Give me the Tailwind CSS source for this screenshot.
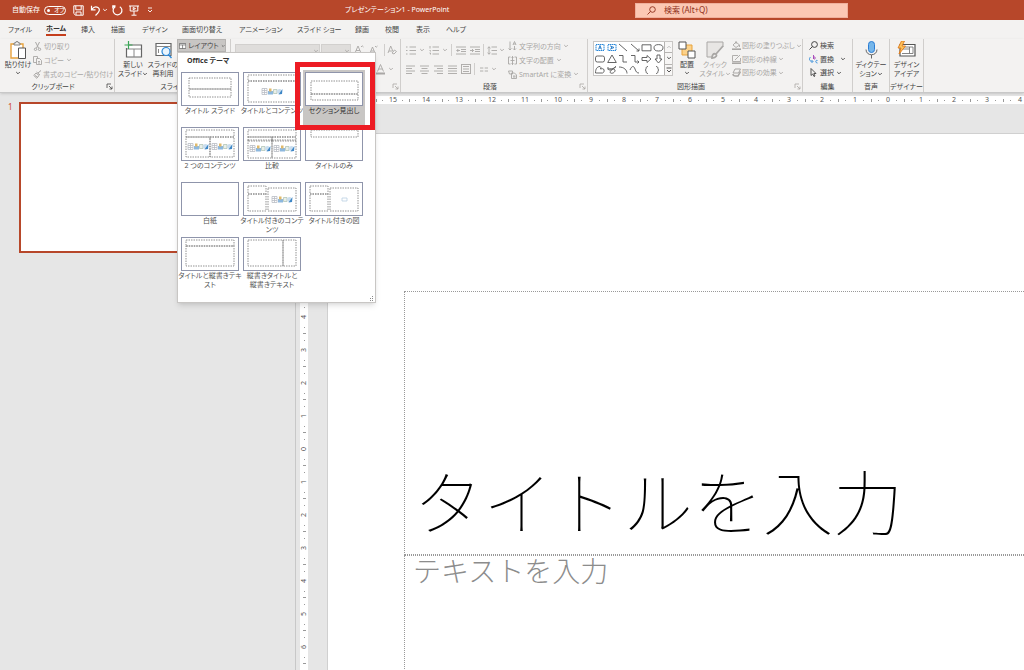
<!DOCTYPE html>
<html lang="ja">
<head>
<meta charset="utf-8">
<meta name="viewport" content="width=device-width, initial-scale=1">
<title>プレゼンテーション1 - PowerPoint</title>
<script src="https://cdn.jsdelivr.net/npm/@tailwindcss/browser@4"></script>
</head>
<body class="flex h-screen flex-col overflow-hidden bg-[#e6e6e6] font-['Noto_Sans','Noto_Sans_CJK_JP',sans-serif] text-[8px] leading-[10px] text-[#444]">

<svg class="hidden" aria-hidden="true">
  <symbol id="chev" viewBox="0 0 6 4"><path d="M1.200 1 3 2.800 4.800 1" fill="none" stroke="currentColor" stroke-width=".9"/></symbol>
  <symbol id="launch" viewBox="0 0 7 7"><path d="M1 5V1h4M3 3l3 3M6 3.500V6H3.500" fill="none" stroke="currentColor" stroke-width=".8"/></symbol>
  <symbol id="content" viewBox="0 0 22 9">
    <path d="M1 1.500h5v6H1zM1 3.500h5M1 5.500h5M3.500 1.500v6" fill="#fff" stroke="#b9bcc4" stroke-width=".8"/>
    <rect x="7" y="4" width="5" height="3.500" fill="#8db8de"/><rect x="8" y="1.500" width="2.500" height="3" fill="#e0b96a"/>
    <path d="M12.500 2.500h3.500v4h-3.500z" fill="#e9efe9" stroke="#a9bfb0" stroke-width=".7"/>
    <circle cx="18.500" cy="4.500" r="2.500" fill="#c9ddee"/><path d="M17.500 7.500 21.500 2l-.5 5z" fill="#3d86c6"/>
  </symbol>
</svg>

<header class="flex h-5 shrink-0 items-center bg-[#b7472a] text-white">
  <div class="flex w-[345px] items-center pl-3">
    <label for="autosave" class="w-[30px] text-[7px] whitespace-nowrap">自動保存</label>
    <span class="relative ml-[2px] h-[9px] w-[22px] rounded-full border border-white">
      <input id="autosave" type="checkbox" role="switch" class="absolute inset-0 size-full appearance-none">
      <span class="absolute left-[2px] top-[2px] size-[3px] rounded-full bg-white"></span>
      <span class="absolute left-[9px] top-0 text-[6px] leading-[7px] [font-feature-settings:'palt']">オフ</span>
    </span>
    <button aria-label="保存" class="ml-[7px]"><svg class="h-[11px] w-[11px]" viewBox="0 0 11 11" fill="none" stroke="currentColor"><path d="M.8.8h9.400v9.400H2.500L.8 8.500zM2.800.8v4h5.400v-4M3 10V7h5v3"/></svg></button>
    <button aria-label="元に戻す" class="ml-[6px]"><svg class="h-[11px] w-[11px]" viewBox="0 0 11 11" fill="none" stroke="currentColor" stroke-width="1.200"><path d="M1.500.8v4h4M1.700 4.500C3.500 2 6 1.200 8 2.500c3 2.200.5 5-2.500 8"/></svg></button>
    <button aria-label="元に戻すの履歴" class="ml-px"><svg class="h-[4px] w-[6px]"><use href="#chev"/></svg></button>
    <button aria-label="繰り返し" class="ml-[4px]"><svg class="h-[11px] w-[11px]" viewBox="0 0 11 11" fill="none" stroke="currentColor" stroke-width="1.200"><path d="M3.500.8H.8v2.700M7.800 1.700a4.400 4.400 0 1 1-5 .3L1 .8"/></svg></button>
    <button aria-label="最初から開始" class="ml-[6px]"><svg class="h-[11px] w-[10px]" viewBox="0 0 10 11" fill="none" stroke="currentColor"><path d="M0 1h10M1.200 1v5h7.600V1M5 6v4M2.500 10.200h5M4.200 2.500v2.200L6.500 3.600z"/></svg></button>
    <button aria-label="クイック アクセス ツール バーのカスタマイズ" class="ml-[8px]"><svg class="h-[6px] w-[6px]" viewBox="0 0 6 6" fill="none" stroke="currentColor" stroke-width=".9"><path d="M1 1h4M1 3l2 2 2-2"/></svg></button>
  </div>
  <h1 class="w-[110px] whitespace-nowrap text-[7px] [font-feature-settings:'palt']">プレゼンテーション1 - PowerPoint</h1>
  <div class="flex flex-1 pl-[180px]">
    <label class="flex h-[15px] w-[213px] items-center border border-[#f0b09c] bg-[#fcc8b4] text-[#8f2e1a]">
      <svg class="ml-[11px] size-[9px] shrink-0" viewBox="0 0 9 9" fill="none" stroke="currentColor" stroke-width=".9"><circle cx="5.500" cy="3.500" r="2.800"/><path d="M3.500 5.500.5 8.500"/></svg>
      <input type="search" aria-label="検索" placeholder="検索 (Alt+Q)" class="ml-2 w-full min-w-0 bg-transparent text-[8px] outline-none placeholder:text-[#8f2e1a]">
    </label>
  </div>
</header>

<nav aria-label="リボン タブ" class="flex h-[19px] shrink-0 items-center bg-[#f3f2f1] pl-2 text-[7px] whitespace-nowrap [font-feature-settings:'palt']">
  <a href="#" class="w-[38px]">ファイル</a>
  <a href="#" class="w-[35px] font-bold text-[#333]"><span class="inline-block border-b-2 border-[#c43e1c]">ホーム</span></a>
  <a href="#" class="w-[30px]">挿入</a>
  <a href="#" class="w-[31px]">描画</a>
  <a href="#" class="w-[40px]">デザイン</a>
  <a href="#" class="w-[57px]">画面切り替え</a>
  <a href="#" class="w-[58px]">アニメーション</a>
  <a href="#" class="w-[58px]">スライド ショー</a>
  <a href="#" class="w-[30px]">録画</a>
  <a href="#" class="w-[31px]">校閲</a>
  <a href="#" class="w-[30px]">表示</a>
  <a href="#">ヘルプ</a>
</nav>

<div class="relative flex h-[54px] shrink-0 border-b border-[#c8c8c8] bg-[#f3f2f1] text-[7px] leading-[9px] whitespace-nowrap shadow-sm [font-feature-settings:'palt']">

  <section class="flex w-[115px] flex-col border-r border-[#d0cecc]">
    <div class="flex h-[43px]">
      <button class="flex w-[30px] flex-col items-center pl-[6px] pt-[2px]">
        <svg class="h-[19px] w-[17px] shrink-0" viewBox="0 0 17 19" fill="none"><path d="M1 3h12v14H1z" fill="#fff" stroke="#e8a33d" stroke-width="1.400"/><path d="M4 4V2h1.500a1.500 1.500 0 0 1 3 0H10v2z" fill="#f3f2f1" stroke="#777" stroke-width=".9"/><path d="M8.500 7h7v10.500h-7z" fill="#fff" stroke="#555"/></svg>
        <span>貼り付け</span>
        <svg class="mt-[2px] h-[4px] w-[6px]"><use href="#chev"/></svg>
      </button>
      <div class="flex flex-col pl-[3px] text-[#a9a7a5]">
        <button class="flex h-[14px] items-center gap-[2px]"><svg class="h-[9px] w-[9px]" viewBox="0 0 9 9" fill="none" stroke="currentColor"><path d="M2.500 0l3 6M6.500 0l-3 6"/><circle cx="2.500" cy="7.300" r="1.200"/><circle cx="6.500" cy="7.300" r="1.200"/></svg>切り取り</button>
        <button class="flex h-[14px] items-center gap-[2px]"><svg class="h-[9px] w-[9px]" viewBox="0 0 9 9" fill="none" stroke="currentColor" stroke-width=".9"><path d="M3.500 6.500h-3v-6h4v2M3.500 2.500h3l2 2v4h-5zM5 5.500h2M5 7h2"/></svg>コピー<svg class="h-[4px] w-[6px]"><use href="#chev"/></svg></button>
        <button class="flex h-[14px] items-center gap-px"><svg class="h-[9px] w-[9px]" viewBox="0 0 9 9" fill="none" stroke="currentColor"><path d="M5 3 8 .5M3.500 2l3.500 3M3 3 .8 5.500l3 2.800L6 5.500z"/><path d="M2 5.500 4.500 7" /></svg>書式のコピー/貼り付け</button>
      </div>
    </div>
    <div class="flex items-center pr-px"><span class="flex-1 text-center">クリップボード</span><button aria-label="クリップボードの詳細"><svg class="size-[7px]"><use href="#launch"/></svg></button></div>
  </section>

  <section class="flex w-[116px] flex-col border-r border-[#d0cecc]">
    <div class="flex h-[43px]">
      <button class="flex w-[34px] flex-col items-center pl-[2px] pt-[2px]">
        <svg class="h-[19px] w-[19px] shrink-0" viewBox="0 0 19 19" fill="none"><path d="M5 4h12.500v12H2.500V7" fill="#fff" stroke="#666" stroke-width="1.200"/><path d="M3 8h14M10 8v8" stroke="#888"/><path d="M4.500 0v8M.5 4h8" stroke="#3aa757" stroke-width="1.200"/></svg>
        <span>新しい<br>スライド<svg class="inline h-[4px] w-[6px]"><use href="#chev"/></svg></span>
      </button>
      <button class="flex w-[28px] flex-col items-center pt-[2px]">
        <svg class="h-[19px] w-[17px] shrink-0" viewBox="0 0 17 19" fill="none"><path d="M1 2.500h15v12H1z" fill="#fff" stroke="#666" stroke-width="1.200"/><path d="M1 5.500h15M3.500 8v4" stroke="#888"/><circle cx="11" cy="10.500" r="4" fill="#eaf4fc" stroke="#2b88d8" stroke-width="1.200"/><path d="m13.500 13.500 3 3.500" stroke="#2b88d8" stroke-width="1.400"/></svg>
        <span>スライドの<br>再利用</span>
      </button>
      <button aria-expanded="true" class="flex h-[13px] w-[49px] items-center gap-[2px] border border-[#b5b3b1] bg-[#c8c6c4] pl-px"><svg class="h-[8px] w-[10px]" viewBox="0 0 10 8" fill="none" stroke="#555" stroke-width=".9"><path d="M.5.5h9v7h-9zM.5 2.500h9M5 2.500v5" fill="#fff"/></svg>レイアウト<svg class="h-[4px] w-[6px]"><use href="#chev"/></svg></button>
    </div>
    <span class="text-center">スライド</span>
  </section>

  <section class="flex w-[170px] flex-col border-r border-[#d0cecc] text-[#a9a7a5]">
    <div class="flex h-[43px] flex-col gap-[5px] pt-[4px]">
      <div class="flex h-[14px] items-center pl-[4px]">
        <span class="relative flex h-[13px] w-[85px]"><select aria-label="フォント" class="w-full appearance-none border border-[#d2d0ce] bg-[#dfdddb]"></select><svg class="pointer-events-none absolute right-px top-[5px] h-[4px] w-[6px]"><use href="#chev"/></svg></span>
        <span class="relative ml-px flex h-[13px] w-[30px]"><select aria-label="フォント サイズ" class="w-full appearance-none border border-[#d2d0ce] bg-[#dfdddb]"></select><svg class="pointer-events-none absolute right-px top-[5px] h-[4px] w-[6px]"><use href="#chev"/></svg></span>
        <button aria-label="フォント サイズの拡大" class="ml-[3px]"><svg class="h-[10px] w-[10px]" viewBox="0 0 10 10" fill="none" stroke="currentColor" stroke-width=".9"><path d="m1 8 3-7 3 7M2 5.500h4M7 2l1.200-1.200L9.500 2"/></svg></button>
        <button aria-label="フォント サイズの縮小" class="ml-[5px]"><svg class="h-[10px] w-[9px]" viewBox="0 0 9 10" fill="none" stroke="currentColor" stroke-width=".9"><path d="m1 8 2.500-6L6 8M2 6h3M6 1l1.200 1.200L8.500 1"/></svg></button>
        <span class="ml-[6px] h-[12px] w-px bg-[#d0cecc]"></span>
        <button aria-label="書式のクリア" class="ml-[2px]"><svg class="h-[10px] w-[10px]" viewBox="0 0 10 10" fill="none" stroke="currentColor" stroke-width=".9"><path d="m1 8 2.700-7L6 6.500M2 6h3M5 8l2.500-3L9.500 6.500 7 9z"/></svg></button>
      </div>
      <div class="flex h-[14px] items-center justify-end pr-[6px]">
        <button aria-label="フォントの色" class="flex items-center gap-[3px]"><svg class="h-[11px] w-[9px]" viewBox="0 0 9 11" fill="none" stroke="currentColor" stroke-width=".9"><path d="m1.500 7.500 3-7 3 7M2.500 5h4"/><path d="M0 9.500h9" stroke-width="2"/></svg><svg class="h-[4px] w-[6px]"><use href="#chev"/></svg></button>
      </div>
    </div>
    <div class="flex justify-end pr-px pt-px"><button aria-label="フォントの詳細"><svg class="size-[7px]"><use href="#launch"/></svg></button></div>
  </section>

  <section class="flex w-[187px] flex-col border-r border-[#d0cecc]">
    <div class="flex h-[43px] text-[#a9a7a5]">
      <div class="flex w-[107px] flex-col gap-[5px] pl-[5px] pt-[4px]">
        <div class="flex h-[14px] items-center">
          <button aria-label="箇条書き" class="flex items-center gap-[3px]"><svg class="h-[9px] w-[10px]" viewBox="0 0 10 9" fill="none" stroke="currentColor" stroke-width=".9"><path d="M3.500 1H10M3.500 4.500H10M3.500 8H10M0 1h1.500M0 4.500h1.500M0 8h1.500"/></svg><svg class="h-[4px] w-[6px]"><use href="#chev"/></svg></button>
          <button aria-label="段落番号" class="ml-[4px] flex items-center gap-[3px]"><svg class="h-[9px] w-[10px]" viewBox="0 0 10 9" fill="none" stroke="currentColor" stroke-width=".9"><path d="M3.500 1H10M3.500 4.500H10M3.500 8H10M1 0v2.500M.5 4.500h1v1M.5 7h1v1.500"/></svg><svg class="h-[4px] w-[6px]"><use href="#chev"/></svg></button>
          <span class="ml-[3px] h-[12px] w-px bg-[#d0cecc]"></span>
          <button aria-label="インデントを減らす" class="ml-[4px]"><svg class="h-[9px] w-[10px]" viewBox="0 0 10 9" fill="none" stroke="currentColor" stroke-width=".9"><path d="M0 1h10M5 3.500h5M5 5.500h5M0 8h10M4 4.500H.8m1.500-1.500L.8 4.500 2.300 6"/></svg></button>
          <button aria-label="インデントを増やす" class="ml-[4px]"><svg class="h-[9px] w-[10px]" viewBox="0 0 10 9" fill="none" stroke="currentColor" stroke-width=".9"><path d="M0 1h10M5 3.500h5M5 5.500h5M0 8h10M0 4.500h3.500M2 3l1.500 1.500L2 6"/></svg></button>
          <span class="ml-[3px] h-[12px] w-px bg-[#d0cecc]"></span>
          <button aria-label="行間" class="ml-[3px] flex items-center gap-[2px]"><svg class="h-[9px] w-[10px]" viewBox="0 0 10 9" fill="none" stroke="currentColor" stroke-width=".9"><path d="M4.500 1H10M4.500 4.500H10M4.500 8H10M2 .8v7.400M.5 2.200 2 .8l1.500 1.400M.5 6.800 2 8.200l1.500-1.400"/></svg><svg class="h-[4px] w-[6px]"><use href="#chev"/></svg></button>
        </div>
        <div class="flex h-[14px] items-center">
          <button aria-label="左揃え" class="w-[14px]"><svg class="h-[9px] w-[9px]" viewBox="0 0 9 9" stroke="currentColor" stroke-width=".9"><path d="M0 1h9M0 3.500h6M0 6h9M0 8.500h6"/></svg></button>
          <button aria-label="中央揃え" class="w-[14px]"><svg class="h-[9px] w-[9px]" viewBox="0 0 9 9" stroke="currentColor" stroke-width=".9"><path d="M0 1h9M1.500 3.500h6M0 6h9M1.500 8.500h6"/></svg></button>
          <button aria-label="右揃え" class="w-[14px]"><svg class="h-[9px] w-[9px]" viewBox="0 0 9 9" stroke="currentColor" stroke-width=".9"><path d="M0 1h9M3 3.500h6M0 6h9M3 8.500h6"/></svg></button>
          <button aria-label="両端揃え" class="w-[13px]"><svg class="h-[9px] w-[9px]" viewBox="0 0 9 9" stroke="currentColor" stroke-width=".9"><path d="M0 1h9M0 3.500h9M0 6h9M0 8.500h9"/></svg></button>
          <button aria-label="均等割り付け"><svg class="h-[10px] w-[10px]" viewBox="0 0 10 10" fill="none" stroke="currentColor" stroke-width=".9"><path d="M.5 0v10M9.500 0v10M2 2.500h6M2 5h6M2 7.500h6M.5.500h9M.5 9.500h9"/></svg></button>
          <span class="ml-[3px] h-[12px] w-px bg-[#d0cecc]"></span>
          <button aria-label="段の追加または削除" class="ml-[5px] flex items-center gap-[3px]"><svg class="h-[9px] w-[8px]" viewBox="0 0 8 9" stroke="currentColor" stroke-width=".9"><path d="M0 3h3.300M0 6h3.300M4.700 3H8M4.700 6H8"/></svg><svg class="h-[4px] w-[6px]"><use href="#chev"/></svg></button>
        </div>
      </div>
      <div class="flex flex-col">
        <button class="flex h-[14px] items-center gap-[2px]"><svg class="h-[10px] w-[9px]" viewBox="0 0 9 10" fill="none" stroke="currentColor" stroke-width=".9"><path d="M2 .5v8.500M.5 7.500 2 9l1.500-1.500M5 4l1.500-3.500L8 4M5.500 3h2M6.500 5v4M5 7.500 6.500 9 8 7.500"/></svg>文字列の方向<svg class="h-[4px] w-[6px]"><use href="#chev"/></svg></button>
        <button class="flex h-[14px] items-center gap-[2px]"><svg class="h-[9px] w-[9px]" viewBox="0 0 9 9" fill="none" stroke="currentColor" stroke-width=".9"><path d="M2.500 1H.5v7h2M6.500 1h2v7h-2M4.500 0v9M2.500 4.500h4M3.500 2l1-1 1 1M3.500 7l1 1 1-1"/></svg>文字の配置<svg class="h-[4px] w-[6px]"><use href="#chev"/></svg></button>
        <button class="flex h-[14px] items-center gap-[2px]"><svg class="h-[9px] w-[9px]" viewBox="0 0 9 9" fill="none" stroke="currentColor" stroke-width=".9"><path d="M.5 1h4v3h-3zM3.500 3h3l2 2v3.500h-5z"/><path d="M5 6h2.500M5 7h2.500"/></svg>SmartArt に変換<svg class="h-[4px] w-[6px]"><use href="#chev"/></svg></button>
      </div>
    </div>
    <div class="flex items-center pr-px"><span class="flex-1 text-center">段落</span><button aria-label="段落の詳細" class="text-[#a9a7a5]"><svg class="size-[7px]"><use href="#launch"/></svg></button></div>
  </section>

  <section class="flex w-[215px] flex-col border-r border-[#d0cecc]">
    <div class="flex h-[43px]">
      <div class="ml-[5px] mt-[2px] flex h-[35px] w-[80px] shrink-0 border border-[#c8c6c4] bg-white" role="group" aria-label="図形">
        <svg class="h-[33px] w-[70px]" viewBox="0 0 70 33" fill="none" stroke="#555" stroke-width=".9">
          <path d="M2 2.500h8v6H2zM14 2.500h8v6h-8z" stroke="#2b88d8" stroke-width="1" stroke-dasharray="1.500 .5"/>
          <path d="m4.500 7.500 1.500-4 1.500 4M5 6h2M16 3.800l4 1.700-4 1.700M17.500 4.500v2" stroke="#1f78c8"/>
          <path d="m25 2 8 7M37 2l8 7M45 6.500V9h-2.500M48 2.800h9v6h-9z"/><ellipse cx="64.500" cy="5.800" rx="4.500" ry="3.200"/>
          <rect x="1.500" y="14" width="9" height="6" rx="1.800"/>
          <path d="m18 13 4.300 7.500h-8.600zM25 13.500h4v6.500h4M37 13.500h4v6.500h4M43.500 18.500 45 20l-1.500 1.500M48 15.500h5v-2l4 3.500-4 3.500v-2h-5zM63 13v4h-2l3.500 4 3.500-4h-2v-4z"/>
          <path d="M6 24.500c-3 0-4.500 2.500-4.500 6.500H8.500q2.500-1 1.500-3.500-1.500-1.500-3.500-.5 1-2-.5-2.500zM14 25c-1 5 5 3 8-.5-3 2-7 5-5.500 6.500 2 1 5-1 4.500-3-1.500-2-6-1-7.500-1"/>
          <path d="M25 25c5 0 8 3 8 6.500M36 28c2-5 4-4 5-1s2 4 4 4M54 24.500c-3 0-1 3-3 3.500 2 .5 0 3.500 3 3.500M62 24.500c3 0 1 3 3 3.500-2 .5 0 3.500-3 3.500"/>
        </svg>
        <div class="flex flex-1 flex-col divide-y divide-[#b5b3b1] border-l border-[#b5b3b1] bg-[#f7f6f5]">
          <button aria-label="前の行" class="flex flex-1 items-center justify-center text-[#bbb]"><svg class="h-[4px] w-[6px] rotate-180"><use href="#chev"/></svg></button>
          <button aria-label="次の行" class="flex flex-1 items-center justify-center"><svg class="h-[4px] w-[6px]"><use href="#chev"/></svg></button>
          <button aria-label="その他の図形" class="flex flex-1 items-center justify-center"><svg class="size-[6px]" viewBox="0 0 6 6" fill="none" stroke="currentColor" stroke-width=".9"><path d="M.5 1h5M1 3l2 2 2-2"/></svg></button>
        </div>
      </div>
      <button class="ml-[4px] flex w-[20px] flex-col items-center pt-[2px]">
        <svg class="h-[19px] w-[18px] shrink-0" viewBox="0 0 18 19" fill="none" stroke="#555"><path d="M4 4h10v10H4z" fill="#fcd28a" stroke="#e8a33d"/><path d="M1 1h7v7H1zM10 10h7v7h-7z" fill="#fff"/></svg>
        <span>配置</span>
        <svg class="mt-[2px] h-[4px] w-[6px]"><use href="#chev"/></svg>
      </button>
      <button class="ml-px flex w-[34px] flex-col items-center pt-[2px] text-[#a9a7a5]">
        <svg class="h-[19px] w-[18px] shrink-0" viewBox="0 0 18 19" fill="none" stroke="currentColor"><path d="M17 6V1H1v15h5" fill="#e8e6e4"/><path d="m17 5-7 8M6 17c0-3 1.500-5 3.500-4s1 3.500-3.500 4z" stroke-width="1.800"/></svg>
        <span>クイック<br>スタイル<svg class="inline h-[4px] w-[6px]"><use href="#chev"/></svg></span>
      </button>
      <div class="flex flex-col text-[#a9a7a5]">
        <button class="flex h-[13px] items-center gap-px"><svg class="h-[9px] w-[9px]" viewBox="0 0 9 9" fill="none" stroke="currentColor" stroke-width=".9"><path d="m4 1 3.500 3L4 6.500 1 4zM4 0v3M7.500 4v2"/><path d="M0 8.200h9" stroke-width="1.600"/></svg>図形の塗りつぶし<svg class="h-[4px] w-[6px]"><use href="#chev"/></svg></button>
        <button class="flex h-[14px] items-center gap-px"><svg class="h-[9px] w-[9px]" viewBox="0 0 9 9" fill="none" stroke="currentColor" stroke-width=".9"><path d="M6 .5H.5v6h8V3M3 5l5-5"/><path d="M0 8.200h9" stroke-width="1.600"/></svg>図形の枠線<svg class="h-[4px] w-[6px]"><use href="#chev"/></svg></button>
        <button class="flex h-[13px] items-center gap-px"><svg class="h-[9px] w-[9px]" viewBox="0 0 9 9" fill="none" stroke="currentColor"><path d="M3 1h5.500L6.500 5H1z"/><path d="M1 6c0 1.500 1 2 2.500 2H6l2.500-4.500" stroke-width="1.500"/></svg>図形の効果<svg class="h-[4px] w-[6px]"><use href="#chev"/></svg></button>
      </div>
    </div>
    <div class="flex items-center pr-px"><span class="flex-1 text-center">図形描画</span><button aria-label="図形描画の詳細" class="text-[#a9a7a5]"><svg class="size-[7px]"><use href="#launch"/></svg></button></div>
  </section>

  <section class="flex w-[50px] flex-col border-r border-[#d0cecc]">
    <div class="flex h-[43px] flex-col pl-[6px]">
      <button class="flex h-[13px] items-center gap-[2px]"><svg class="h-[9px] w-[9px]" viewBox="0 0 9 9" fill="none" stroke="currentColor"><circle cx="5.500" cy="3.500" r="2.900"/><path d="M3.500 5.500.5 8.500"/></svg>検索</button>
      <button class="flex h-[14px] items-center gap-[2px]"><svg class="h-[9px] w-[9px]" viewBox="0 0 9 9" fill="none" stroke-width=".9"><path d="M4.500 0v4M4.500 2.500a1 1 0 1 1 0 1" stroke="#a33fb5"/><path d="M8.500 5.500c-2-1-2.500 2.500 0 2.500M1.500 2C-.5 4 .5 6.500 3.500 6.500M2.500 5l1.500 1.500L2.500 8" stroke="#2b88d8"/></svg>置換<svg class="ml-[4px] h-[4px] w-[6px]"><use href="#chev"/></svg></button>
      <button class="flex h-[13px] items-center gap-[2px]"><svg class="h-[9px] w-[9px]" viewBox="0 0 9 9" fill="none" stroke="currentColor" stroke-width=".9"><path d="M2 .5v7l1.700-1.500 1.300 2.500 1-.5-1.200-2.500H7z"/></svg>選択<svg class="h-[4px] w-[6px]"><use href="#chev"/></svg></button>
    </div>
    <span class="text-center">編集</span>
  </section>

  <section class="flex w-[37px] flex-col border-r border-[#d0cecc]">
    <button class="flex h-[43px] flex-col items-center pt-[2px]">
      <svg class="h-[19px] w-[13px] shrink-0" viewBox="0 0 13 19" fill="none"><rect x="3.500" y=".5" width="6" height="11" rx="3" fill="#75b6ea" stroke="#2b7cd3"/><path d="M1 8.500c0 7 11 7 11 0M6.500 14v3.500" stroke="#666"/></svg>
      <span>ディクテー<br>ション<svg class="inline h-[4px] w-[6px]"><use href="#chev"/></svg></span>
    </button>
    <span class="text-center">音声</span>
  </section>

  <section class="flex w-[34px] flex-col border-r border-[#d0cecc]">
    <button class="flex h-[43px] flex-col items-center pt-[2px]">
      <svg class="h-[19px] w-[19px] shrink-0" viewBox="0 0 19 19" fill="none"><path d="M3 3.500h15v11.500H3z" fill="#fff" stroke="#555" stroke-width="1.200"/><path d="M5 6h11v6.500H5M5 8h7M12.500 6v6.500" stroke="#777" stroke-width=".9"/><path d="M4.500 0 1 7h3l-2 6 6.500-8H5L7.500 0z" fill="#fcc25c" stroke="#e07a1a" stroke-width=".9"/></svg>
      <span>デザイン<br>アイデア</span>
    </button>
    <span class="text-center">デザイナー</span>
  </section>

  <!-- Layout gallery, dropped down from its ribbon button -->
  <div class="absolute left-[177px] top-[13px] z-20 w-[199px] border border-[#c8c6c4] bg-white px-px pb-[12px] pt-[3px] text-[#555] shadow-md">
    <h2 class="pb-[4px] pl-[8px] text-[7px] leading-[10px] font-bold text-[#333]">Office テーマ</h2>
    <div id="layouts" class="grid grid-cols-[repeat(3,62px)]"></div>
    <svg class="absolute bottom-px right-px size-[5px]" viewBox="0 0 5 5" fill="#888"><path d="M3 0h1v1H3zM3 2h1v1H3zM1 2h1v1H1zM3 4h1v1H3zM1 4h1v1H1z"/></svg>
    <div class="absolute left-[117px] top-[9px] h-[68px] w-[80px] border-[5px] border-[#ed1c24]"></div>
  </div>
</div>

<div class="flex min-h-0 flex-1">
  <aside aria-label="スライド一覧" class="flex w-[296px] shrink-0 items-start border-r border-[#c8c8c8] pl-2 pt-[9px]">
    <span class="w-[11px] text-[#d24726]">1</span>
    <button aria-label="スライド 1" class="aspect-video w-[268px] border-2 border-[#b7472a] bg-white"></button>
  </aside>
  <main class="flex min-w-0 flex-1 flex-col pl-[4px] pt-[3px]">
    <div class="h-[8px] shrink-0 overflow-hidden pl-[28px]"><div id="hruler" class="flex h-full bg-white pl-[15px] text-[7px] leading-[8px] text-[#555]"></div></div>
    <div class="flex min-h-0 flex-1">
      <div class="w-[8px] shrink-0 overflow-hidden pt-[29px]"><div id="vruler" class="flex h-full flex-col bg-white pt-[2px] text-[7px] leading-[8px] text-[#555]"></div></div>
      <div class="min-w-0 flex-1 pl-[19px] pt-[29px]">
        <div class="h-full border-l border-t border-[#d0d0d0] bg-white pl-[76px] pt-[157px]">
          <div class="flex h-[264px] items-end border-y border-l border-dotted border-[#999] pb-[5px] pl-[8px] font-['Noto_Sans_CJK_JP',sans-serif] text-[70px] leading-[98px] font-thin whitespace-nowrap text-black">タイトルを入力</div>
          <div class="h-[130px] border-l border-t border-dotted border-[#999] pl-[8px] font-['Noto_Sans_CJK_JP',sans-serif] text-[28px] leading-[28px] font-light whitespace-nowrap text-[#8c8c8c]">テキストを入力</div>
        </div>
      </div>
    </div>
  </main>
</div>

<script>
  const box = (x, y, w, h) => `<rect x="${x}" y="${y}" width="${w}" height="${h}"/>`;
  const pic = (x, y) => `<use href="#content" x="${x}" y="${y}" width="22" height="9" stroke="none" stroke-dasharray="none"/>`;
  const layouts = [
    ['タイトル スライド', box(7, 5, 42, 11) + box(7, 16, 42, 8)],
    ['タイトルとコンテンツ', box(4, 2, 49, 6) + box(4, 8, 49, 21) + pic(17, 14)],
    ['セクション見出し', box(5, 8, 47, 13) + box(5, 21, 47, 6)],
    ['2 つのコンテンツ', box(4, 2, 48, 7) + box(4, 9, 24, 20) + box(28, 9, 24, 20) + pic(5, 14) + pic(29, 14)],
    ['比較', box(4, 2, 48, 7) + box(4, 9, 24, 4) + box(28, 9, 24, 4) + box(4, 12, 24, 18) + box(28, 12, 24, 18) + pic(5, 16) + pic(29, 16)],
    ['タイトルのみ', box(5, 2, 47, 7)],
    ['白紙', ''],
    ['タイトル付きのコンテ<br>ンツ', box(4, 3, 18, 8) + box(4, 11, 18, 17) + box(24, 5, 28, 23) + pic(27, 12)],
    ['タイトル付きの図', box(4, 3, 18, 8) + box(4, 11, 18, 17) + box(24, 5, 28, 23) + '<path d="M36 15h5v3h-5z" stroke="#b9cfe2" stroke-dasharray="none"/>'],
    ['タイトルと縦書きテキ<br>スト', box(4, 2, 48, 6) + box(4, 8, 48, 20)],
    ['縦書きタイトルと<br>縦書きテキスト', box(4, 2, 35, 26) + box(39, 2, 13, 26)]
  ];
  document.getElementById('layouts').innerHTML = layouts.map(([name, shapes], i) =>
    `<button class="flex h-[55px] flex-col items-center justify-start px-px pt-[2px] text-center ${i === 2 ? 'bg-[#c8c6c4] text-[#333]' : ''}">
      <svg class="h-[34px] w-[58px] shrink-0 border border-[#8f95ab] bg-white" viewBox="0 0 56 32" fill="none" stroke="#777" stroke-width=".8" stroke-dasharray="1.500 1">${shapes}</svg>
      <span class="leading-[9px]">${name}</span></button>`).join('');

  const cells = (from, to) => {
    const list = [];
    for (let n = from; n >= to; n--) list.push(Math.abs(n));
    return list;
  };
  document.getElementById('hruler').innerHTML = cells(16, -4).map(n =>
    `<span class="flex w-[33px] shrink-0 items-center justify-between"><i class="h-[3px] w-px bg-[#999]"></i><i class="size-px bg-[#999]"></i><b class="font-normal">${n}</b><i class="size-px bg-[#999]"></i><i></i></span>`).join('');
  document.getElementById('vruler').innerHTML = cells(9, -6).map(n =>
    `<span class="flex h-[33px] shrink-0 flex-col items-center justify-between"><i class="h-px w-[3px] bg-[#999]"></i><i class="size-px bg-[#999]"></i><b class="-rotate-90 font-normal">${n}</b><i class="size-px bg-[#999]"></i><i></i></span>`).join('') + '<i class="mx-auto h-px w-[3px] bg-[#999]"></i>';
</script>
</body>
</html>
